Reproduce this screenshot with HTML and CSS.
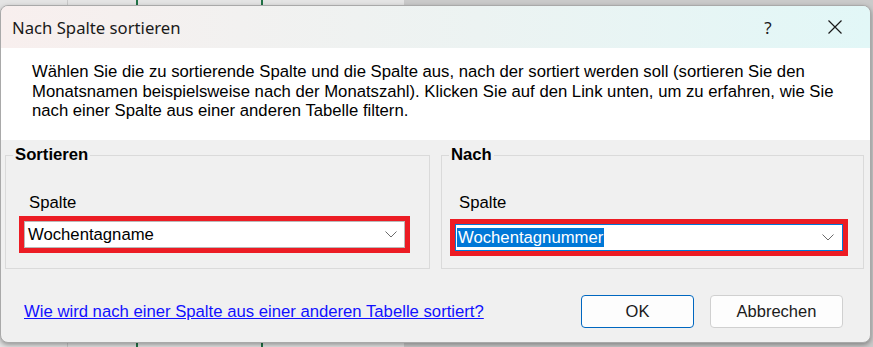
FILE: index.html
```html
<!DOCTYPE html>
<html lang="de">
<head>
    <meta charset="UTF-8">
    <meta name="viewport" content="width=device-width, initial-scale=1.0">
    <title>Nach Spalte sortieren</title>
    <link rel="stylesheet" href="styles.css">
</head>
<body>
    <div class="dialog">
        <div class="titlebar">
            <span class="title">Nach Spalte sortieren</span>
            <span class="tb-btn help">?</span>
            <span class="tb-btn close">
                <svg width="14" height="14" viewBox="0 0 14 14">
                    <path d="M0.5 0.5 L13.5 13.5 M13.5 0.5 L0.5 13.5" stroke="#1a1a1a" stroke-width="1.2" fill="none"/>
                </svg>
            </span>
        </div>

        <div class="intro">
            Wählen Sie die zu sortierende Spalte und die Spalte aus, nach der sortiert werden soll (sortieren Sie den<br>
            Monatsnamen beispielsweise nach der Monatszahl). Klicken Sie auf den Link unten, um zu erfahren, wie Sie<br>
            nach einer Spalte aus einer anderen Tabelle filtern.
        </div>

        <div class="content">
            <div class="groups">
                <fieldset class="group group-left">
                    <legend>Sortieren</legend>
                    <div class="label">Spalte</div>
                    <div class="mark">
                        <div class="combo">
                            <span class="value">Wochentagname</span>
                            <svg class="chevron" width="12" height="7" viewBox="0 0 12 7">
                                <polyline points="0.5,0.5 6,6 11.5,0.5" stroke="#6b6b6b" stroke-width="1" fill="none"/>
                            </svg>
                        </div>
                    </div>
                </fieldset>

                <fieldset class="group group-right">
                    <legend>Nach</legend>
                    <div class="label">Spalte</div>
                    <div class="mark">
                        <div class="combo focused">
                            <span class="value selected">Wochentagnummer</span>
                            <svg class="chevron" width="12" height="7" viewBox="0 0 12 7">
                                <polyline points="0.5,0.5 6,6 11.5,0.5" stroke="#6b6b6b" stroke-width="1" fill="none"/>
                            </svg>
                        </div>
                    </div>
                </fieldset>
            </div>

            <div class="footer">
                <a class="help-link" href="#">Wie wird nach einer Spalte aus einer anderen Tabelle sortiert?</a>
                <button class="btn btn-default">OK</button>
                <button class="btn">Abbrechen</button>
            </div>
        </div>
    </div>
</body>
</html>
```

FILE: styles.css
```css
body {
    margin: 0;
    font-family: "Liberation Sans", Arial, sans-serif;
    background: linear-gradient(90deg, #e4e4e4 0 67px, #c9c9c9 67px 68px, #e4e4e4 68px 136px, #217346 136px 138px, #e4e4e4 138px 261px, #217346 261px 263px, #e4e4e4 263px 404px, #cacaca 404px);
    height: 347px;
    overflow: hidden;
}
.dialog {
    margin-top: 5px;
    width: 869px;
    height: 336px;
    border: 1px solid #a9a9a9;
    border-radius: 8px;
    overflow: hidden;
    background-color: #f0f0f0;
    box-shadow: 0 2px 5px rgba(0, 0, 0, 0.35);
    display: flex;
    flex-direction: column;
}
.titlebar {
    height: 42px;
    display: flex;
    align-items: center;
    padding-left: 11px;
    background: linear-gradient(90deg, #f8efee, #ecf3f2 55%, #e2f7f7);
    font-family: "Noto Sans", sans-serif;
    color: #1a1a1a;
}
.title {
    font-size: 16.7px;
    margin-right: auto;
}
.tb-btn {
    display: flex;
    align-items: center;
    justify-content: center;
    height: 42px;
}
.help {
    font-size: 17px;
    width: 46px;
    margin-right: 21px;
}
.close {
    width: 46px;
    margin-right: 12px;
}
.intro {
    height: 78px;
    background-color: #fff;
    padding: 14px 0 0 31px;
    font-size: 16.7px;
    line-height: 19.5px;
    color: #000;
}
.groups {
    display: flex;
    gap: 11px;
    padding: 7px 0 0 4px;
}
.group {
    margin: 0;
    padding: 0 0 12px 0;
    border: 1px solid #dadada;
    box-sizing: border-box;
    min-inline-size: 0;
}
.group-left {
    width: 425px;
}
.group-right {
    width: 423px;
}
legend {
    font-size: 16.7px;
    font-weight: bold;
    line-height: 16px;
    padding: 0 2px;
    margin-left: 7px;
    color: #000;
}
.label {
    margin-top: 30px;
    font-size: 16.7px;
    line-height: 19px;
    color: #000;
}
.group-left .label {
    margin-left: 23px;
}
.group-right .label {
    margin-left: 17px;
}
.mark {
    border: 5px solid #ec1c24;
    box-sizing: border-box;
    height: 37px;
}
.group-left .mark {
    margin: 4px 0 0 13px;
    width: 391px;
}
.group-right .mark {
    margin: 7px 0 0 8px;
    width: 398px;
}
.combo {
    height: 27px;
    box-sizing: border-box;
    background-color: #fff;
    border: 1px solid #b9b9b9;
    display: flex;
    align-items: center;
    justify-content: space-between;
    padding: 0 7px 0 3px;
    font-size: 16.7px;
    color: #000;
}
.combo.focused {
    border-color: #0078d7;
    padding-left: 1px;
    padding-right: 8px;
}
.value {
    line-height: 19px;
}
.selected {
    background-color: #0078d7;
    color: #fff;
    padding: 0 1px;
}
.footer {
    display: flex;
    align-items: center;
    padding: 26px 27px 0 23px;
}
.help-link {
    margin-right: auto;
    font-size: 16.7px;
    color: #1010ff;
    text-decoration: underline;
}
.btn {
    height: 33px;
    width: 133px;
    margin-left: 16px;
    background-color: #fdfdfd;
    border: 1px solid #d0d0d0;
    border-radius: 4px;
    font-family: "Liberation Sans", Arial, sans-serif;
    font-size: 16.5px;
    color: #1a1a1a;
}
.btn-default {
    width: 113px;
    border-color: #0067c0;
}
```
